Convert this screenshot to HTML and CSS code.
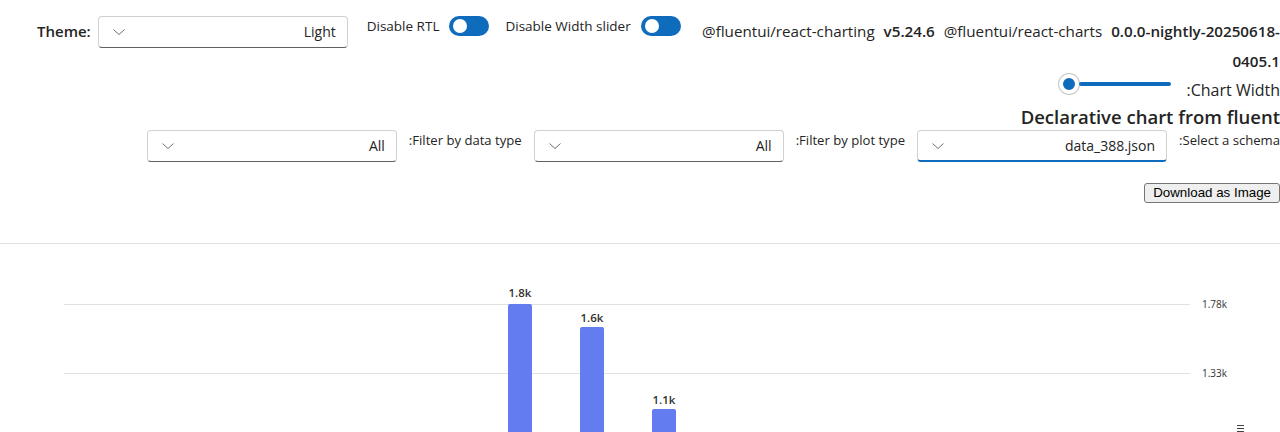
FILE: index.html
```html
<!DOCTYPE html>
<html>
<head>
    <title>Declarative chart</title>
    <link rel="stylesheet" href="styles.css">
</head>
<body>
    <div class="top-bar">
        <div class="theme-group">
            <label class="theme-label">Theme:</label>
            <div class="dropdown">
                <svg class="chevron" width="12" height="12" viewBox="0 0 12 12"><path d="M0.5 3.5 L6 8.5 L11.5 3.5" fill="none" stroke="#707070" stroke-width="1"/></svg>
                <span class="dropdown-value">Light</span>
            </div>
        </div>
        <div class="switch-group">
            <span class="switch-label">Disable RTL</span>
            <span class="switch"><span class="knob"></span></span>
        </div>
        <div class="switch-group second">
            <span class="switch-label">Disable Width slider</span>
            <span class="switch"><span class="knob"></span></span>
        </div>
        <div class="versions">
            <span class="pkg">@fluentui/react-charting</span>
            <b>v5.24.6</b>
            <span class="pkg">@fluentui/react-charts</span>
            <b>0.0.0-nightly-20250618-0405.1</b>
        </div>
    </div>

    <div class="width-row">
        <div class="slider">
            <span class="thumb"></span>
            <span class="track"></span>
        </div>
        <span class="width-label">:Chart Width</span>
    </div>

    <h2 class="title">Declarative chart from fluent</h2>

    <div class="filter-row">
        <div class="dropdown">
            <svg class="chevron" width="12" height="12" viewBox="0 0 12 12"><path d="M0.5 3.5 L6 8.5 L11.5 3.5" fill="none" stroke="#707070" stroke-width="1"/></svg>
            <span class="dropdown-value">All</span>
        </div>
        <span class="filter-label">:Filter by data type</span>
        <div class="dropdown">
            <svg class="chevron" width="12" height="12" viewBox="0 0 12 12"><path d="M0.5 3.5 L6 8.5 L11.5 3.5" fill="none" stroke="#707070" stroke-width="1"/></svg>
            <span class="dropdown-value">All</span>
        </div>
        <span class="filter-label">:Filter by plot type</span>
        <div class="dropdown focused">
            <svg class="chevron" width="12" height="12" viewBox="0 0 12 12"><path d="M0.5 3.5 L6 8.5 L11.5 3.5" fill="none" stroke="#707070" stroke-width="1"/></svg>
            <span class="dropdown-value">data_388.json</span>
        </div>
        <span class="filter-label">:Select a schema</span>
    </div>

    <div class="download-row">
        <button class="download">Download as Image</button>
    </div>

    <div class="divider"></div>

    <!-- Chart -->
    <svg class="chart" width="1280" height="188" viewBox="0 0 1280 188">
        <line x1="64" y1="60.5" x2="1190" y2="60.5" stroke="#e1e1e1"/>
        <line x1="64" y1="129.5" x2="1190" y2="129.5" stroke="#e1e1e1"/>
        <text class="axis" x="1202" y="64">1.78k</text>
        <text class="axis" x="1202" y="133">1.33k</text>

        <path d="M508 62 a2 2 0 0 1 2 -2 h20 a2 2 0 0 1 2 2 V188 H508 Z" fill="#637cef"/>
        <text class="bar-label" x="520" y="53">1.8k</text>
        <path d="M580 85 a2 2 0 0 1 2 -2 h20 a2 2 0 0 1 2 2 V188 H580 Z" fill="#637cef"/>
        <text class="bar-label" x="592" y="78">1.6k</text>
        <path d="M652 167 a2 2 0 0 1 2 -2 h20 a2 2 0 0 1 2 2 V188 H652 Z" fill="#637cef"/>
        <text class="bar-label" x="664" y="160">1.1k</text>

        <g stroke="#424242" stroke-width="1">
            <line x1="1237" y1="181.5" x2="1244" y2="181.5"/>
            <line x1="1237" y1="184.5" x2="1244" y2="184.5"/>
            <line x1="1237" y1="187.5" x2="1244" y2="187.5"/>
        </g>
    </svg>
</body>
</html>
```

FILE: styles.css
```css
body {
    margin: 0;
    font-family: "Open Sans", "Noto Sans", sans-serif;
    font-size: 14px;
    color: #242424;
    background-color: #fff;
    overflow: hidden;
}

.top-bar {
    display: flex;
    align-items: flex-start;
    padding: 16px 0 0 37px;
}

.theme-group {
    display: flex;
    align-items: flex-start;
    gap: 7px;
}

.theme-label {
    font-size: 15px;
    font-weight: 600;
    line-height: 30px;
}

.dropdown {
    box-sizing: border-box;
    width: 250px;
    height: 32px;
    border: 1px solid #d1d1d1;
    border-bottom-color: #616161;
    border-radius: 4px;
    display: flex;
    align-items: center;
    justify-content: space-between;
    padding: 0 11px 0 14px;
    background-color: #fff;
}

.dropdown.focused {
    border-bottom: 2px solid #0f6cbd;
}

.dropdown-value {
    line-height: 20px;
}

.chevron {
    display: block;
}

.switch-group {
    display: flex;
    align-items: center;
    gap: 10px;
    margin-left: 19px;
    height: 20px;
}

.switch-group.second {
    margin-left: 16px;
}

.switch-label {
    font-size: 13.5px;
    line-height: 20px;
}

.switch {
    box-sizing: border-box;
    width: 40px;
    height: 20px;
    border-radius: 10px;
    background-color: #0f6cbd;
    position: relative;
}

.knob {
    position: absolute;
    left: 4px;
    top: 3px;
    width: 14px;
    height: 14px;
    border-radius: 50%;
    background-color: #fff;
}

.versions {
    flex: 1;
    margin-left: 12px;
    text-align: right;
    font-size: 15.2px;
    line-height: 30px;
}

.versions b {
    font-weight: 600;
    margin: 0 5px;
}

.versions b:last-child {
    margin-right: 0;
}

.width-row {
    display: flex;
    justify-content: flex-end;
    align-items: center;
    gap: 16px;
    margin-top: 0;
    height: 22px;
}

.slider {
    display: flex;
    align-items: center;
    width: 112px;
    margin-top: -6px;
}

.thumb {
    box-sizing: border-box;
    width: 20px;
    height: 20px;
    border-radius: 50%;
    border: 4px solid #fff;
    background-color: #0f6cbd;
    box-shadow: 0 0 0 1px #c8c8c8;
    flex: none;
}

.track {
    flex: 1;
    height: 4px;
    background-color: #0f6cbd;
    border-radius: 2px;
}

.width-label {
    font-size: 16px;
    margin-top: 5px;
}

.title {
    margin: 6px 0 0;
    text-align: right;
    font-size: 18.5px;
    font-weight: 600;
    line-height: 26px;
}

.filter-row {
    display: flex;
    justify-content: flex-end;
    align-items: flex-start;
    gap: 12px;
    margin-top: 0;
}

.filter-label {
    font-size: 13.1px;
    line-height: 20px;
}

.download-row {
    display: flex;
    justify-content: flex-end;
    margin-top: 21px;
    padding-right: 0;
}

.download {
    font-family: "Liberation Sans", Arial, sans-serif;
    font-size: 13.33px;
    line-height: 16px;
    padding: 1px 8px;
    border: 1px solid #767676;
    border-radius: 3px;
    background-color: #efefef;
    color: #000;
}

.divider {
    height: 1px;
    background-color: #e0e0e0;
    margin-top: 40px;
}

.chart {
    display: block;
}

.axis {
    font-size: 10px;
    fill: #323130;
}

.bar-label {
    font-size: 11.5px;
    font-weight: 600;
    fill: #323130;
    text-anchor: middle;
}
```
